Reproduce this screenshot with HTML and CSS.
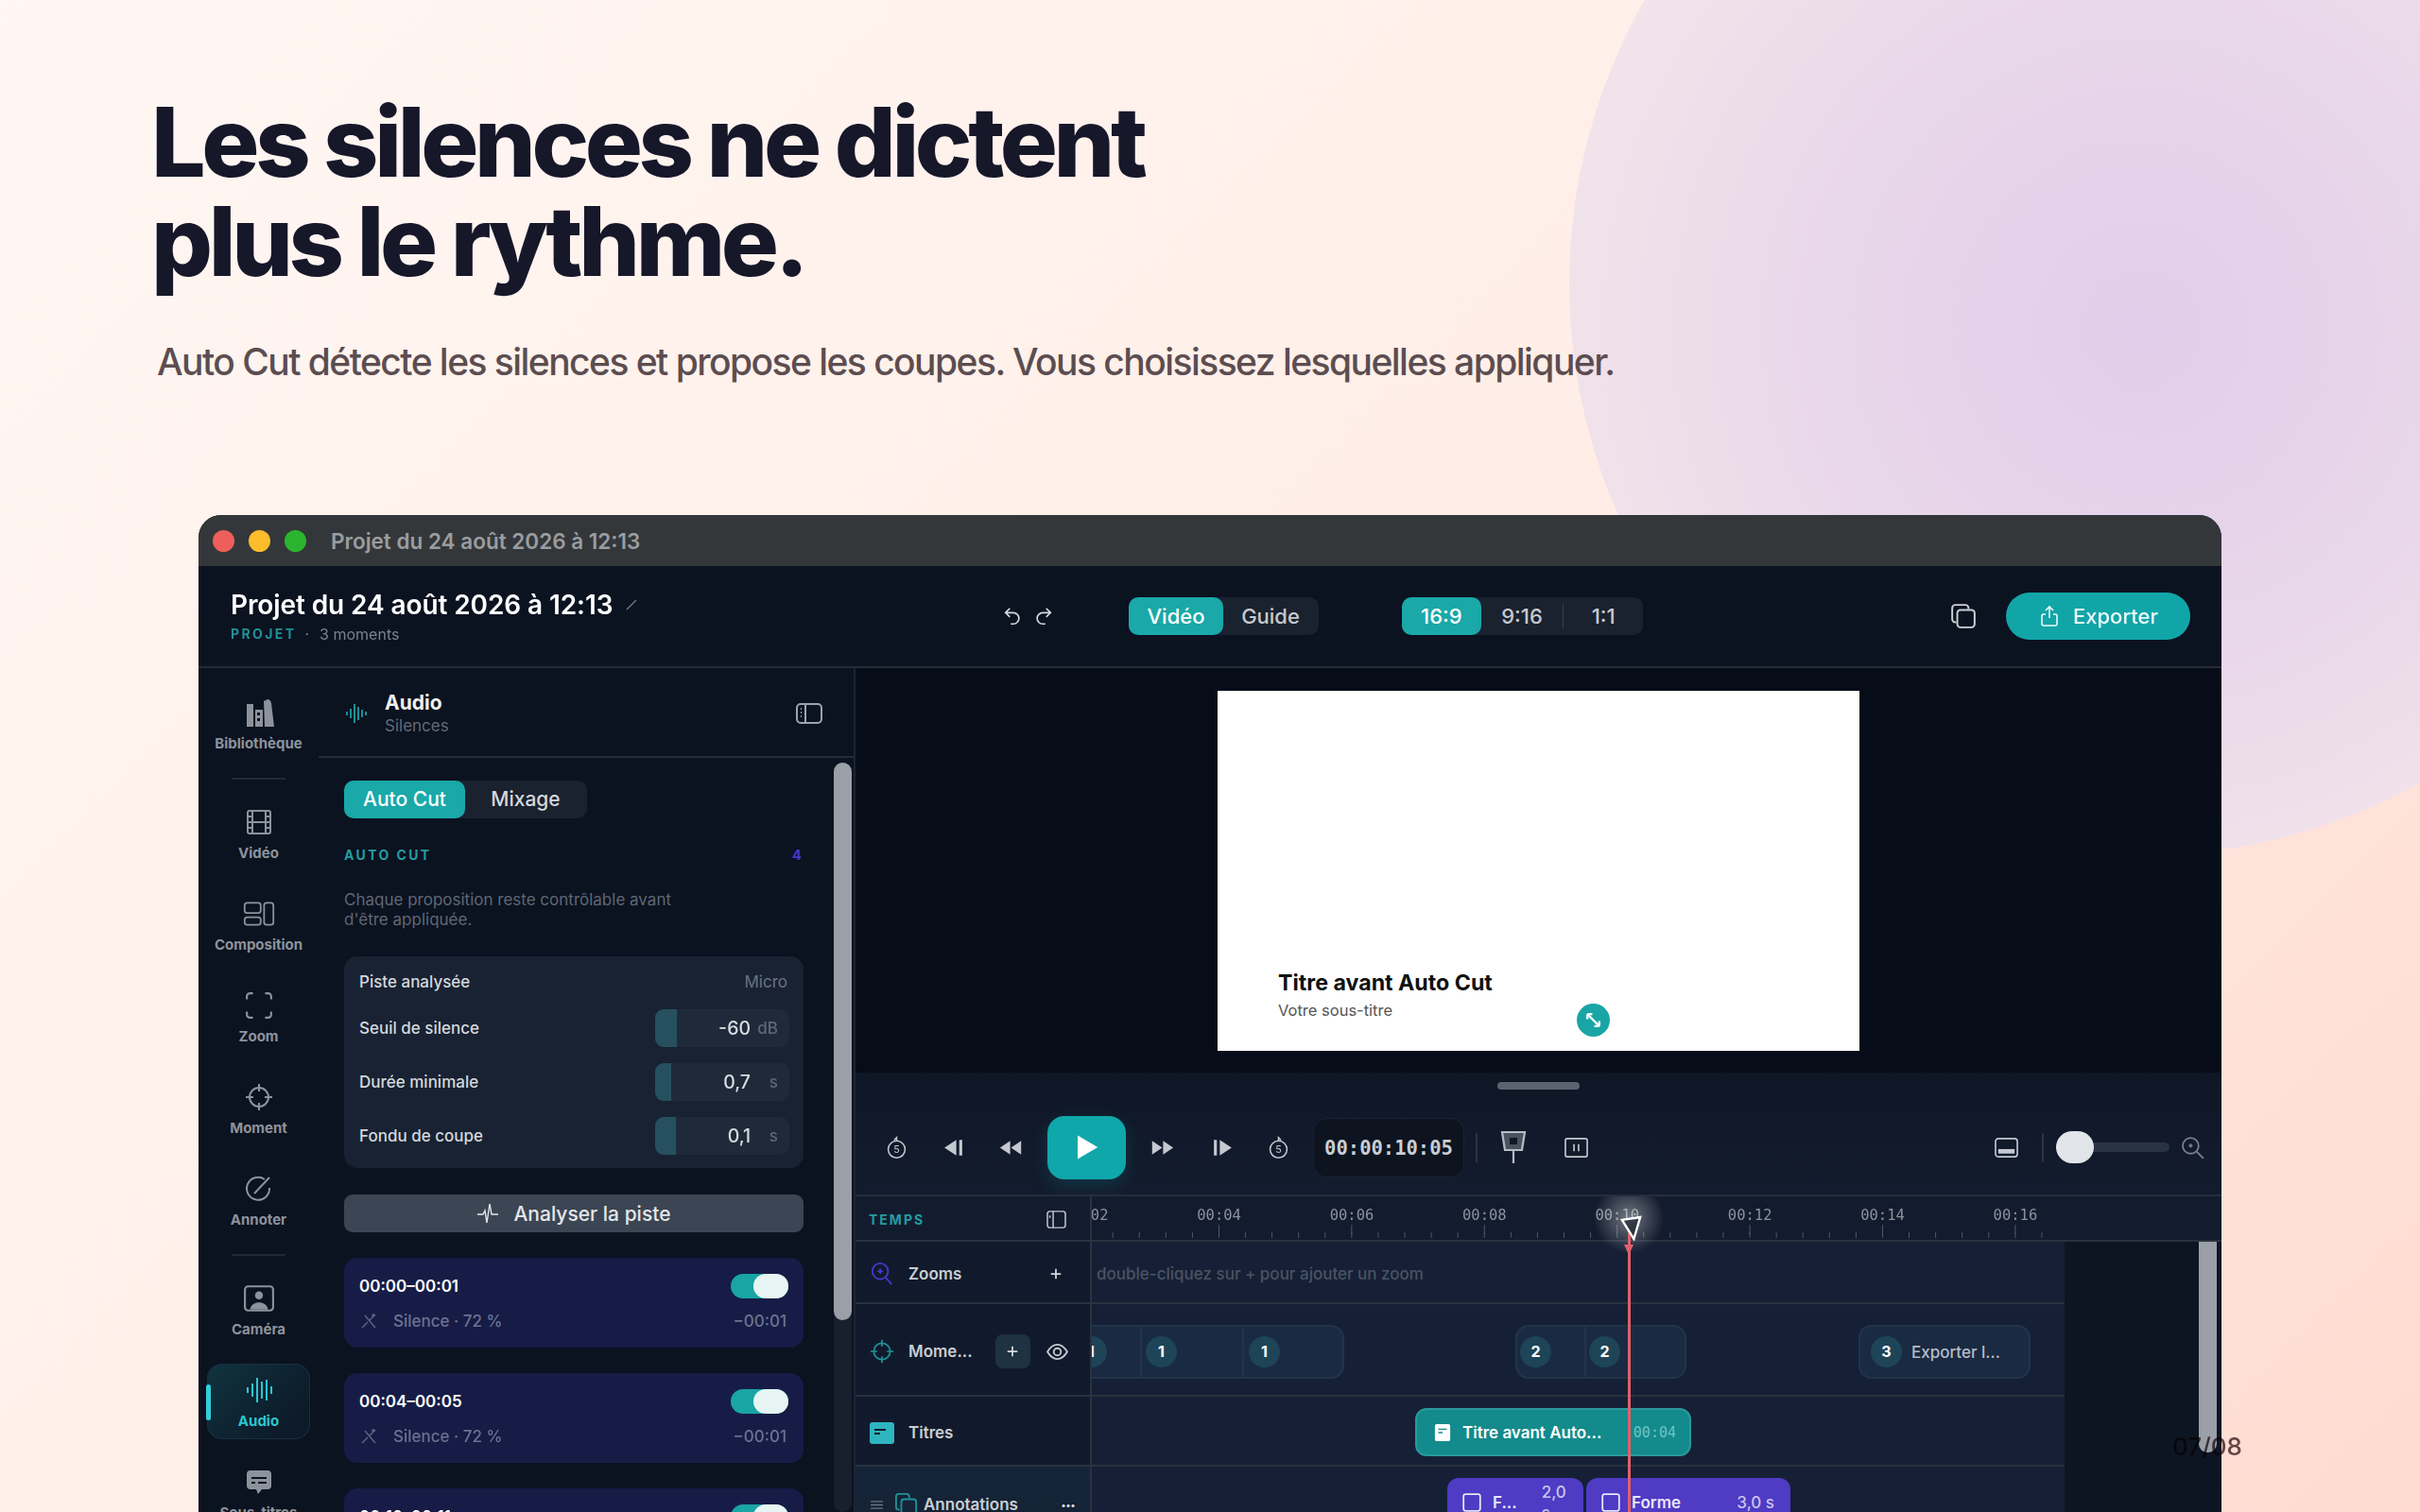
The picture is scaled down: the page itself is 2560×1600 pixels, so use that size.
FILE: index.html
```html
<!DOCTYPE html>
<html lang="fr">
<head>
    <meta charset="UTF-8">
    <title>Auto Cut</title>
    <link rel="stylesheet" href="styles.css">
</head>
<body>
<div class="slide">
    <div class="blob"></div>

    <header class="hero">
        <h1>Les silences ne dictent<br>plus le rythme.</h1>
        <p>Auto Cut détecte les silences et propose les coupes. Vous choisissez lesquelles appliquer.</p>
    </header>

    <div class="window">
        <!-- Title bar -->
        <div class="titlebar">
            <span class="light red"></span>
            <span class="light yellow"></span>
            <span class="light green"></span>
            <span class="titlebar-text">Projet du 24 août 2026 à 12:13</span>
        </div>

        <!-- Project header -->
        <div class="topbar">
            <div class="project">
                <div class="project-name">Projet du 24 août 2026 à 12:13
                    <svg class="pen" viewBox="0 0 14 14"><path d="M2 12 12 2" /></svg>
                </div>
                <div class="project-meta"><b>PROJET</b><i>·</i><span>3 moments</span></div>
            </div>
            <div class="undo">
                <svg viewBox="0 0 24 24"><path d="M9 3 4 8l5 5M4 8h9a6 6 0 0 1 0 13h-3" /></svg>
                <svg viewBox="0 0 24 24"><path d="m15 3 5 5-5 5M20 8h-9a6 6 0 0 0 0 13h3" /></svg>
            </div>
            <div class="seg seg-mode">
                <span class="on">Vidéo</span><span>Guide</span>
            </div>
            <div class="seg seg-ratio">
                <span class="on">16:9</span><span>9:16</span><em></em><span>1:1</span>
            </div>
            <svg class="copy-icon" viewBox="0 0 26 26"><path d="M6 19H5a3 3 0 0 1-3-3V5a3 3 0 0 1 3-3h10a3 3 0 0 1 3 3v1" /><rect x="7" y="7" width="17" height="17" rx="3" /></svg>
            <button class="export">
                <svg viewBox="0 0 24 24"><path d="M12 14V2M8 6l4-4 4 4M8 10H6a2 2 0 0 0-2 2v8a2 2 0 0 0 2 2h12a2 2 0 0 0 2-2v-8a2 2 0 0 0-2-2h-2" /></svg>
                Exporter
            </button>
        </div>

        <div class="workspace">
            <!-- Icon rail -->
            <nav class="rail">
                <div class="rail-item">
                    <svg viewBox="0 0 34 30" class="fill"><path d="M4 6h7v24H4zM13 12h8v18h-8zM15 15v3h3v-3zM15 21v3h3v-3zM22 3l4-2c2 0 3 1 4 4l3 25H23z" fill-rule="evenodd" /></svg>
                    <span>Bibliothèque</span>
                </div>
                <div class="rail-sep"></div>
                <div class="rail-item">
                    <svg viewBox="0 0 30 30"><rect x="3" y="3" width="24" height="24" rx="2" /><path d="M8 3v24M22 3v24M3 15h24M3 9h5M3 21h5M22 9h5M22 21h5" /></svg>
                    <span>Vidéo</span>
                </div>
                <div class="rail-item">
                    <svg viewBox="0 0 38 30"><rect x="2" y="2" width="19" height="12" rx="3" /><rect x="2" y="19" width="19" height="9" rx="3" /><rect x="25" y="2" width="11" height="26" rx="3" /></svg>
                    <span>Composition</span>
                </div>
                <div class="rail-item">
                    <svg viewBox="0 0 28 28"><path d="M2 8V5a3 3 0 0 1 3-3h3M20 2h3a3 3 0 0 1 3 3v3M26 20v3a3 3 0 0 1-3 3h-3M8 26H5a3 3 0 0 1-3-3v-3" /></svg>
                    <span>Zoom</span>
                </div>
                <div class="rail-item">
                    <svg viewBox="0 0 30 30"><circle cx="15" cy="15" r="10" /><path d="M15 1v8M15 21v8M1 15h8M21 15h8" /></svg>
                    <span>Moment</span>
                </div>
                <div class="rail-item">
                    <svg viewBox="0 0 30 30"><path d="M21 5a12 12 0 1 0 5 9" /><path d="M10 20 26 3" /></svg>
                    <span>Annoter</span>
                </div>
                <div class="rail-sep"></div>
                <div class="rail-item">
                    <svg viewBox="0 0 32 28"><rect x="2" y="2" width="28" height="24" rx="3" /><circle cx="16" cy="11" r="4" class="solid" /><path d="M7 25c1-5 5-7 9-7s8 2 9 7z" class="solid" /></svg>
                    <span>Caméra</span>
                </div>
                <div class="rail-item active">
                    <svg viewBox="0 0 30 30"><path d="M3 12v6M8 8v14M13 2v26M18 6v18M23 4v22M28 11v8" /></svg>
                    <span>Audio</span>
                </div>
                <div class="rail-item">
                    <svg viewBox="0 0 30 30"><path class="solid" d="M6 3h18a4 4 0 0 1 4 4v12a4 4 0 0 1-4 4h-6l-4 5-2-5H6a4 4 0 0 1-4-4V7a4 4 0 0 1 4-4z" /><path class="cut" d="M7 11h16M7 16h4M14 16h9" /></svg>
                    <span>Sous-titres</span>
                </div>
            </nav>

            <!-- Audio panel -->
            <aside class="panel">
                <div class="panel-head">
                    <svg class="panel-wave" viewBox="0 0 22 24"><path d="M1 10v4M5 7v10M9 2v20M13 5v14M17 8v8M21 10v4" /></svg>
                    <div>
                        <div class="panel-title">Audio</div>
                        <div class="panel-sub">Silences</div>
                    </div>
                    <svg class="panel-toggle" viewBox="0 0 28 24"><rect x="1" y="2" width="26" height="20" rx="4" /><path d="M10 2v20M5 7h1M5 11h1M5 15h1" /></svg>
                </div>
                <div class="panel-body">
                    <div class="panel-content">
                        <div class="tabs">
                            <span class="on">Auto Cut</span><span>Mixage</span>
                        </div>
                        <div class="section-row"><b>AUTO CUT</b><span>4</span></div>
                        <p class="hint">Chaque proposition reste contrôlable avant<br>d'être appliquée.</p>

                        <div class="settings">
                            <div class="setting-top"><span>Piste analysée</span><span class="muted">Micro</span></div>
                            <div class="setting">
                                <span>Seuil de silence</span>
                                <div class="field"><i class="fill-a"></i><b>-60</b><small>dB</small></div>
                            </div>
                            <div class="setting">
                                <span>Durée minimale</span>
                                <div class="field"><i class="fill-b"></i><b>0,7</b><small>s</small></div>
                            </div>
                            <div class="setting">
                                <span>Fondu de coupe</span>
                                <div class="field"><i class="fill-c"></i><b>0,1</b><small>s</small></div>
                            </div>
                        </div>

                        <button class="analyse">
                            <svg viewBox="0 0 24 24"><path d="M1 13h6l2-4 2 13 3-20 2 11h7" /></svg>
                            Analyser la piste
                        </button>

                        <div class="cut-card">
                            <div class="cut-row"><b>00:00–00:01</b><span class="switch"></span></div>
                            <div class="cut-row sub">
                                <svg viewBox="0 0 20 20"><path d="m3 17 6-6M11 9l6-6M6 4l11 13M15 2v4M13 4h4" /></svg>
                                <span>Silence · 72 %</span><em>−00:01</em>
                            </div>
                        </div>
                        <div class="cut-card">
                            <div class="cut-row"><b>00:04–00:05</b><span class="switch"></span></div>
                            <div class="cut-row sub">
                                <svg viewBox="0 0 20 20"><path d="m3 17 6-6M11 9l6-6M6 4l11 13M15 2v4M13 4h4" /></svg>
                                <span>Silence · 72 %</span><em>−00:01</em>
                            </div>
                        </div>
                        <div class="cut-card">
                            <div class="cut-row"><b>00:10–00:11</b><span class="switch"></span></div>
                        </div>
                    </div>
                    <div class="scroll"><div class="scroll-thumb"></div></div>
                </div>
            </aside>

            <!-- Preview and timeline -->
            <main class="main">
                <div class="stage">
                    <div class="video">
                        <div class="video-title">Titre avant Auto Cut</div>
                        <div class="video-sub">Votre sous-titre</div>
                        <div class="video-dot">
                            <svg viewBox="0 0 20 20"><path d="M4 4l12 12M4 4h5M4 4v5M16 16h-5M16 16v-5" /></svg>
                        </div>
                    </div>
                </div>

                <div class="player">
                    <div class="handle"></div>
                    <div class="controls">
                        <div class="transport">
                            <svg class="ic" viewBox="0 0 24 28"><circle cx="12" cy="16" r="10" /><path d="M12 6V2l-3 3" /><text x="12" y="20.5" class="five">5</text></svg>
                            <svg class="ic solid-ic" viewBox="0 0 24 24"><path d="M15 4v16L3 12zM18 4h3v16h-3z" /></svg>
                            <svg class="ic solid-ic" viewBox="0 0 28 24"><path d="M13 4v16L1 12zM26 4v16L14 12z" /></svg>
                            <button class="play"><svg viewBox="0 0 24 24"><path d="M4 2v20l17-10z" /></svg></button>
                            <svg class="ic solid-ic" viewBox="0 0 28 24"><path d="M2 4v16l12-8zM15 4v16l12-8z" /></svg>
                            <svg class="ic solid-ic" viewBox="0 0 24 24"><path d="M3 4h3v16H3zM9 4v16l12-8z" /></svg>
                            <svg class="ic" viewBox="0 0 24 28"><circle cx="12" cy="16" r="10" /><path d="M12 6V2l3 3" /><text x="12" y="20.5" class="five">5</text></svg>
                            <div class="timecode">00:00:10:05</div>
                            <div class="ctl-sep"></div>
                            <svg class="marker" viewBox="0 0 28 36"><path class="marker-body" d="M2 2h24l-3 19H5z" /><rect x="10" y="8" width="8" height="7" class="marker-hole" /><path d="M14 21v14" /></svg>
                            <svg class="ic" viewBox="0 0 26 24"><rect x="1" y="2" width="24" height="20" rx="2" /><path d="M10.500 8v8M15.500 8v8" /></svg>
                        </div>
                        <div class="view-tools">
                            <svg class="ic" viewBox="0 0 26 22"><rect x="1" y="1" width="24" height="20" rx="3" /><path class="thick" d="M4 15h18" /></svg>
                            <div class="ctl-sep tall"></div>
                            <div class="slider"><span></span></div>
                            <svg class="ic dim" viewBox="0 0 24 24"><circle cx="10" cy="10" r="8" /><path d="m16 16 7 7M10 8v4M8 10h4" /></svg>
                        </div>
                    </div>

                    <div class="timeline">
                        <div class="ruler">
                            <div class="ruler-head">
                                <b>TEMPS</b>
                                <svg viewBox="0 0 24 22"><rect x="1" y="1" width="22" height="20" rx="3" /><path d="M8 1v20M4 6v3" /></svg>
                            </div>
                            <div class="ruler-track">
                                <div class="ruler-labels">
                                    <span>00:02</span><span>00:04</span><span>00:06</span><span>00:08</span><span>00:10</span><span>00:12</span><span>00:14</span><span>00:16</span>
                                </div>
                                <div class="ticks"></div>
                            </div>
                        </div>

                        <div class="tracks">
                            <div class="row row-zooms">
                                <div class="row-head">
                                    <svg class="row-ic purple" viewBox="0 0 26 28"><circle cx="11" cy="11" r="9" /><path d="m17 18 7 8M11 8v6M8 11h6" /></svg>
                                    <span>Zooms</span>
                                    <svg class="plus" viewBox="0 0 16 16"><path d="M8 2v12M2 8h12" /></svg>
                                </div>
                                <div class="row-track hint-track">double-cliquez sur + pour ajouter un zoom</div>
                            </div>

                            <div class="row row-moments">
                                <div class="row-head">
                                    <svg class="row-ic teal" viewBox="0 0 30 30"><circle cx="15" cy="15" r="10" /><path d="M15 1v8M15 21v8M1 15h8M21 15h8" /></svg>
                                    <span>Mome...</span>
                                    <div class="add-box"><svg class="plus" viewBox="0 0 16 16"><path d="M8 2v12M2 8h12" /></svg></div>
                                    <svg class="eye" viewBox="0 0 24 20"><path d="M1 10c3-5 7-8 11-8s8 3 11 8c-3 5-7 8-11 8S4 15 1 10z" /><circle cx="12" cy="10" r="4" /></svg>
                                </div>
                                <div class="row-track">
                                    <div class="moment m-a">
                                        <div class="slot slot-a"><u>1</u></div>
                                        <div class="slot slot-b"><u>1</u></div>
                                        <div class="slot"><u>1</u></div>
                                    </div>
                                    <div class="moment m-b">
                                        <div class="slot slot-c"><u>2</u></div>
                                        <div class="slot"><u>2</u></div>
                                    </div>
                                    <div class="moment m-c">
                                        <div class="slot"><u>3</u><span>Exporter l...</span></div>
                                    </div>
                                </div>
                            </div>

                            <div class="row row-titles">
                                <div class="row-head">
                                    <svg class="row-ic cyan" viewBox="0 0 26 26"><rect x="1" y="3" width="24" height="21" rx="2" /><path d="M5 10h12M5 14h6" /></svg>
                                    <span>Titres</span>
                                </div>
                                <div class="row-track">
                                    <div class="title-clip">
                                        <svg viewBox="0 0 20 22"><rect x="1" y="1" width="18" height="20" rx="2" /><path d="M5 7h10M5 11h5" /></svg>
                                        <span>Titre avant Auto...</span>
                                        <em>00:04</em>
                                    </div>
                                </div>
                            </div>

                            <div class="row row-notes">
                                <div class="row-head">
                                    <svg class="drag" viewBox="0 0 16 12"><path d="M1 2h14M1 6h14M1 10h14" /></svg>
                                    <svg class="row-ic teal notes-ic" viewBox="0 0 26 26"><path d="M5 19H4a3 3 0 0 1-3-3V4a3 3 0 0 1 3-3h9a3 3 0 0 1 3 3v2" /><rect x="7" y="7" width="17" height="18" rx="3" /></svg>
                                    <span>Annotations</span>
                                    <b class="dots">•••</b>
                                </div>
                                <div class="row-track">
                                    <div class="note n-a">
                                        <svg viewBox="0 0 20 20"><rect x="2" y="2" width="16" height="16" rx="2" /></svg>
                                        <span>F...</span><em>2,0<br>s</em>
                                    </div>
                                    <div class="note n-b">
                                        <svg viewBox="0 0 20 20"><rect x="2" y="2" width="16" height="16" rx="2" /></svg>
                                        <span>Forme</span><em>3,0 s</em>
                                    </div>
                                </div>
                            </div>
                        </div>

                        <div class="tl-scroll"></div>
                        <div class="glow"></div>
                        <div class="playhead"></div>
                        <svg class="cursor" viewBox="0 0 26 28"><path d="M3 5 23 2 16 26z" /></svg>
                    </div>
                </div>
            </main>
        </div>
    </div>

    <div class="page-num">07/08</div>
</div>
</body>
</html>
```

FILE: styles.css
```css
/* Slide */
* {
    box-sizing: border-box;
}
html, body {
    margin: 0;
    padding: 0;
}
body {
    font-family: "Inter", "Liberation Sans", sans-serif;
}
.slide {
    position: relative;
    width: 2560px;
    height: 1600px;
    overflow: hidden;
    background: linear-gradient(135deg, #fff7f3 0%, #ffeee7 50%, #ffdbd1 100%);
}
.blob {
    position: absolute;
    left: 1660px;
    top: -305px;
    width: 1210px;
    height: 1210px;
    border-radius: 50%;
    background: radial-gradient(circle at 50% 54%, #e2cdea 0%, #e8d6ea 35%, #f2e4ea 72%, #f8ebea 100%);
}

/* Hero */
.hero {
    position: relative;
    padding: 98px 0 0 160px;
    height: 545px;
}
.hero h1 {
    margin: 0;
    font-size: 102px;
    line-height: 105px;
    font-weight: 850;
    letter-spacing: -4.4px;
    color: #17172a;
}
.hero p {
    margin: 51px 0 0 6px;
    font-size: 39px;
    line-height: 48px;
    font-weight: 500;
    letter-spacing: -1.55px;
    color: #5c4d50;
}

/* Window */
.window {
    position: relative;
    margin-left: 210px;
    width: 2140px;
    height: 1055px;
    overflow: hidden;
    border-radius: 24px 24px 0 0;
    background: #0b1220;
    color: #d4d8dd;
    filter: blur(0.5px);
}
.titlebar {
    height: 54px;
    background: #34373a;
    display: flex;
    align-items: center;
    padding-left: 15px;
}
.light {
    width: 23px;
    height: 23px;
    border-radius: 50%;
    margin-right: 15px;
}
.red { background: #ee5f5b; }
.yellow { background: #fdbc2c; }
.green { background: #2bb52f; }
.titlebar-text {
    margin-left: 11px;
    font-size: 22.500px;
    font-weight: 600;
    color: #9a9da0;
}

/* Top bar */
.topbar {
    height: 108px;
    display: flex;
    align-items: center;
    border-bottom: 2px solid #252c38;
    position: relative;
}
.project {
    margin-left: 34px;
    width: 791px;
    flex: none;
}
.project-name {
    font-size: 28px;
    font-weight: 600;
    line-height: 34px;
    letter-spacing: -0.1px;
    color: #fff;
    display: flex;
    align-items: center;
    gap: 13px;
}
.pen {
    width: 14px;
    height: 14px;
    fill: none;
    stroke: #6f7783;
    stroke-width: 1.5;
}
.project-meta {
    margin-top: 4px;
    font-size: 16px;
    line-height: 20px;
    color: #7b828e;
    display: flex;
    align-items: center;
}
.project-meta b {
    font-size: 14px;
    letter-spacing: 2.4px;
    color: #1f9297;
}
.project-meta i {
    font-style: normal;
    margin: 0 11px 0 9px;
}
.undo {
    display: flex;
    gap: 11px;
    width: 134px;
    margin-left: 25px;
}
.undo svg {
    width: 22px;
    height: 22px;
    fill: none;
    stroke: #d5d9de;
    stroke-width: 1.8;
}
.seg {
    display: flex;
    align-items: center;
    height: 40px;
    background: #1a2230;
    border-radius: 10px;
    font-size: 22px;
    font-weight: 500;
    color: #c6cad0;
}
.seg span {
    height: 40px;
    line-height: 40px;
    text-align: center;
}
.seg span.on {
    background: #1aa8a8;
    color: #fff;
    border-radius: 10px;
}
.seg-mode {
    width: 201px;
    margin-right: 88px;
    flex: none;
}
.seg-mode span { width: 100px; }
.seg-ratio {
    width: 255px;
    flex: none;
}
.seg-ratio span { width: 84px; }
.seg-ratio span:nth-child(2) { width: 87px; }
.seg-ratio em {
    width: 1px;
    height: 25px;
    background: #3a4250;
}
.copy-icon {
    width: 28px;
    height: 28px;
    margin-left: 325px;
    fill: none;
    stroke: #cdd1d7;
    stroke-width: 1.8;
    flex: none;
}
.export {
    margin-left: 31px;
    width: 195px;
    height: 50px;
    flex: none;
    border: none;
    border-radius: 25px;
    background: #12a5a8;
    color: #eafafa;
    font: 500 22px "Inter", sans-serif;
    display: flex;
    align-items: center;
    justify-content: center;
    gap: 13px;
}
.export svg {
    width: 24px;
    height: 26px;
    fill: none;
    stroke: #eafafa;
    stroke-width: 1.6;
}

/* Workspace */
.workspace {
    display: flex;
    height: 893px;
}
.rail {
    width: 127px;
    flex: none;
    padding-top: 19px;
    display: flex;
    flex-direction: column;
    align-items: center;
    gap: 17px;
}
.rail-item {
    position: relative;
    width: 109px;
    height: 80px;
    flex: none;
    display: flex;
    flex-direction: column;
    align-items: center;
    color: #8d939c;
    font-size: 15px;
    font-weight: 700;
    white-space: nowrap;
}
.rail-item svg {
    width: 34px;
    height: 30px;
    margin-top: 13px;
    fill: none;
    stroke: currentColor;
    stroke-width: 2;
    flex: none;
}
.rail-item svg.fill {
    fill: currentColor;
    stroke: none;
}
.rail-item span {
    position: absolute;
    top: 51px;
    line-height: 20px;
}
.solid {
    fill: currentColor;
    stroke: none;
}
.cut {
    stroke: #0b1220;
}
.rail-sep {
    width: 57px;
    height: 2px;
    flex: none;
    background: #20283a;
}
.rail-item.active {
    color: #2fc4d0;
    border-radius: 16px;
    box-shadow: inset 0 0 0 1px #17303f;
    background: linear-gradient(135deg, #103340, #0d1a29 80%);
}
.rail-item.active::before {
    content: "";
    position: absolute;
    left: -1px;
    top: 22px;
    width: 5px;
    height: 38px;
    border-radius: 3px;
    background: #2fd0dc;
}

/* Audio panel */
.panel {
    width: 568px;
    flex: none;
    border-right: 2px solid #1d2432;
    display: flex;
    flex-direction: column;
}
.panel-head {
    height: 95px;
    flex: none;
    border-bottom: 2px solid #252c38;
    display: flex;
    align-items: center;
    padding-left: 29px;
    padding-top: 2px;
}
.panel-wave {
    width: 22px;
    height: 24px;
    fill: none;
    stroke: #1a8f96;
    stroke-width: 2;
    margin-right: 19px;
}
.panel-title {
    font-size: 21px;
    font-weight: 700;
    line-height: 26px;
    color: #eef0f2;
}
.panel-sub {
    font-size: 17px;
    line-height: 22px;
    color: #626a77;
}
.panel-toggle {
    width: 28px;
    height: 24px;
    margin-left: auto;
    margin-right: 33px;
    fill: none;
    stroke: #9da3ad;
    stroke-width: 2;
}
.panel-body {
    flex: 1;
    display: flex;
    padding-left: 27px;
    min-height: 0;
}
.panel-content {
    width: 486px;
    flex: none;
    padding-top: 24px;
}
.scroll {
    width: 19px;
    margin-left: 32px;
    margin-top: 5px;
    border-radius: 10px;
    background: #182030;
    flex: none;
}
.scroll-thumb {
    height: 590px;
    border-radius: 10px;
    background: #9a9fa8;
}
.tabs {
    display: flex;
    width: 257px;
    height: 40px;
    background: #1a2230;
    border-radius: 10px;
    font-size: 21px;
    font-weight: 500;
    color: #d4d8dd;
}
.tabs span {
    width: 128px;
    line-height: 40px;
    text-align: center;
}
.tabs .on {
    background: #1aa8a8;
    color: #fff;
    border-radius: 10px;
}
.section-row {
    margin-top: 27px;
    height: 22px;
    display: flex;
    justify-content: space-between;
    align-items: center;
    padding-right: 2px;
    font-size: 14px;
}
.section-row b {
    letter-spacing: 2.4px;
    color: #259ca1;
}
.section-row span {
    color: #4338ca;
    font-weight: 700;
    font-size: 15px;
}
.hint {
    margin: 27px 0 0;
    font-size: 17px;
    line-height: 21px;
    color: #5f6875;
}
.settings {
    margin-top: 28px;
    height: 224px;
    padding: 17px 15px 0 16px;
    border-radius: 14px;
    background: #182232;
    font-size: 17px;
    font-weight: 500;
}
.setting-top {
    display: flex;
    justify-content: space-between;
    height: 20px;
    line-height: 20px;
    margin-bottom: 18px;
    padding-right: 2px;
}
.muted {
    color: #6b7380;
    font-weight: 400;
}
.setting {
    display: flex;
    justify-content: space-between;
    align-items: center;
    height: 41px;
    margin-bottom: 16px;
}
.field {
    position: relative;
    width: 142px;
    height: 40px;
    border-radius: 9px;
    background: #1e2a39;
    overflow: hidden;
    display: flex;
    align-items: center;
    justify-content: flex-end;
}
.field i {
    position: absolute;
    left: 0;
    top: 0;
    bottom: 0;
    background: #27505f;
}
.fill-a { width: 23px; }
.fill-b { width: 17px; }
.fill-c { width: 22px; }
.field b {
    font-size: 19.500px;
    font-weight: 500;
    color: #d8dce0;
}
.field small {
    width: 41px;
    padding-right: 12px;
    text-align: right;
    font-size: 17px;
    color: #5f6875;
}
.analyse {
    margin-top: 28px;
    width: 100%;
    height: 40px;
    border: none;
    border-radius: 9px;
    background: #3c4553;
    color: #e3e6ea;
    font: 500 21px "Inter", sans-serif;
    display: flex;
    align-items: center;
    justify-content: center;
    gap: 15px;
}
.analyse svg {
    width: 24px;
    height: 24px;
    fill: none;
    stroke: #e3e6ea;
    stroke-width: 1.4;
}
.cut-card {
    margin-top: 27px;
    height: 95px;
    padding: 17px 16px 0;
    border-radius: 14px;
    background: #161c46;
}
.cut-row {
    display: flex;
    align-items: center;
    justify-content: space-between;
    height: 26px;
    font-size: 17px;
    color: #fff;
}
.cut-row b {
    font-weight: 600;
}
.switch {
    position: relative;
    width: 61px;
    height: 26px;
    border-radius: 13px;
    background: #1aa5a5;
}
.switch::after {
    content: "";
    position: absolute;
    right: 0;
    top: 0;
    width: 37px;
    height: 26px;
    border-radius: 13px;
    background: #e6f5f4;
}
.cut-row.sub {
    margin-top: 11px;
    color: #6b7290;
    font-weight: 500;
}
.cut-row.sub svg {
    width: 20px;
    height: 20px;
    margin-right: 16px;
    fill: none;
    stroke: #5a6280;
    stroke-width: 1.5;
    flex: none;
}
.cut-row.sub span {
    flex: 1;
}
.cut-row.sub em {
    font-style: normal;
    padding-right: 2px;
}

/* Preview */
.main {
    flex: 1;
    min-width: 0;
    display: flex;
    flex-direction: column;
}
.stage {
    height: 428px;
    flex: none;
    padding-top: 24px;
    padding-left: 383px;
    background: #070c19;
}
.video {
    position: relative;
    width: 679px;
    height: 381px;
    background: #fff;
    padding: 293px 0 0 64px;
}
.video-title {
    font-size: 23.200px;
    font-weight: 700;
    line-height: 32px;
    color: #111;
}
.video-sub {
    margin-top: 3px;
    font-size: 16.500px;
    line-height: 20px;
    color: #555;
}
.video-dot {
    position: absolute;
    left: 380px;
    top: 331px;
    width: 35px;
    height: 35px;
    border-radius: 50%;
    background: #1aa5a5;
    display: flex;
    align-items: center;
    justify-content: center;
}
.video-dot svg {
    width: 21px;
    height: 21px;
    fill: none;
    stroke: #fff;
    stroke-width: 2.2;
}

/* Player */
.player {
    flex: 1;
    min-height: 0;
    display: flex;
    flex-direction: column;
    background: linear-gradient(#0f1726, #131c2e 130px);
}
.handle {
    width: 87px;
    height: 8px;
    margin: 10px 0 0 679px;
    border-radius: 4px;
    background: #5b6270;
    flex: none;
}
.controls {
    height: 113px;
    flex: none;
    padding-top: 11px;
    display: flex;
    align-items: center;
    justify-content: space-between;
    border-bottom: 2px solid #252d3c;
}
.transport {
    margin-left: 13px;
    display: grid;
    grid-template-columns: 60px 60px 62px 99px 60px 68px 50px 184px 2px 76px 56px;
    justify-items: center;
    align-items: center;
}
.ic {
    width: 25px;
    height: 25px;
    fill: none;
    stroke: #c4c9d0;
    stroke-width: 1.7;
}
.ic.solid-ic {
    fill: #c4c9d0;
    stroke: none;
}
.ic.dim {
    stroke: #7a818c;
}
.five {
    font-size: 12px;
    fill: #c4c9d0;
    stroke: none;
    text-anchor: middle;
    font-family: "Inter", sans-serif;
}
.play {
    width: 83px;
    height: 67px;
    border: none;
    border-radius: 18px;
    background: #10a7aa;
    box-shadow: 0 6px 18px rgba(16, 167, 170, 0.2);
    display: flex;
    align-items: center;
    justify-content: center;
}
.play svg {
    width: 30px;
    height: 30px;
    fill: #fff;
}
.timecode {
    width: 160px;
    height: 63px;
    line-height: 63px;
    text-align: center;
    border-radius: 14px;
    background: #0d1420;
    border: 1px solid #1a2333;
    font-family: "DejaVu Sans Mono", monospace;
    font-size: 20.500px;
    font-weight: 700;
    color: #c9ced4;
}
.ctl-sep {
    width: 2px;
    height: 31px;
    background: #2c3443;
}
.marker {
    width: 28px;
    height: 36px;
    fill: none;
    stroke: #b6bbc3;
    stroke-width: 2.2;
}
.marker-body {
    fill: #4a5260;
}
.marker-hole {
    fill: #10182a;
    stroke: none;
}
.view-tools {
    display: flex;
    align-items: center;
    padding-right: 18px;
}
.ctl-sep.tall {
    margin: 0 13px 0 25px;
}
.thick {
    stroke-width: 5;
}
.slider {
    position: relative;
    width: 120px;
    height: 10px;
    margin-right: 12px;
    border-radius: 5px;
    background: #2a3344;
}
.slider span {
    position: absolute;
    left: 0;
    top: -12px;
    width: 40px;
    height: 34px;
    border-radius: 17px;
    background: #e1e4e8;
}

/* Timeline */
.timeline {
    position: relative;
    flex: 1;
    min-height: 0;
    overflow: hidden;
    background: #0e1522;
}
.ruler {
    height: 48px;
    display: flex;
    background: #131c2e;
    border-bottom: 2px solid #2a3240;
}
.ruler-head {
    width: 250px;
    flex: none;
    border-right: 2px solid #2a3240;
    display: flex;
    align-items: center;
    justify-content: space-between;
    padding: 2px 25px 0 14px;
}
.ruler-head b {
    font-size: 14px;
    letter-spacing: 2px;
    color: #259ca1;
}
.ruler-head svg {
    width: 21px;
    height: 19px;
    fill: none;
    stroke: #c4c9d0;
    stroke-width: 1.7;
}
.ruler-track {
    position: relative;
    flex: 1;
    overflow: hidden;
}
.ruler-labels {
    display: grid;
    grid-template-columns: repeat(8, 140.4px);
    margin-left: -76px;
    padding-top: 10px;
    font-family: "DejaVu Sans Mono", monospace;
    font-size: 15.500px;
    line-height: 20px;
    color: #8b929c;
    text-align: center;
}
.ticks {
    position: absolute;
    left: 0;
    top: 30px;
    bottom: 2px;
    width: 1008px;
    background-image:
        linear-gradient(90deg, #4f5866 1px, transparent 1px),
        linear-gradient(90deg, #4f5866 1px, transparent 1px);
    background-size: 140.4px 10px, 28.08px 6px;
    background-position: 134px 0, 21.700px 100%;
    background-repeat: repeat-x;
}
.tracks {
    width: 1279px;
}
.row {
    display: flex;
    border-bottom: 2px solid #2a3240;
    background: #152036;
}
.row-zooms { height: 66px; }
.row-moments { height: 98px; }
.row-titles { height: 74px; }
.row-notes {
    height: 76px;
    border-bottom: none;
}
.row-head {
    width: 250px;
    flex: none;
    display: flex;
    align-items: center;
    padding: 4px 0 0 15px;
    border-right: 2px solid #2a3240;
    background: #111a2c;
    font-size: 17px;
    font-weight: 600;
    color: #c9ced4;
    position: relative;
}
.row-notes .row-head {
    background: linear-gradient(#16243a, #142234);
}
.row-ic {
    width: 26px;
    height: 26px;
    margin-right: 15px;
    fill: none;
    stroke-width: 2;
    flex: none;
}
.purple { stroke: #4338ca; }
.teal { stroke: #1f9297; }
.cyan {
    fill: #2fb5c0;
    stroke: #2fb5c0;
}
.cyan path { stroke: #111a2c; }
.plus {
    width: 14px;
    height: 14px;
    fill: none;
    stroke: #d5d9de;
    stroke-width: 2;
    flex: none;
}
.row-zooms .plus {
    margin-left: auto;
    margin-right: 29px;
}
.add-box {
    width: 37px;
    height: 36px;
    margin-left: 24px;
    border-radius: 8px;
    background: #1d3342;
    display: flex;
    align-items: center;
    justify-content: center;
    flex: none;
}
.eye {
    width: 23px;
    height: 19px;
    margin-left: 17px;
    fill: none;
    stroke: #c4c9d0;
    stroke-width: 2;
    flex: none;
}
.drag {
    width: 15px;
    height: 11px;
    margin-right: 12px;
    fill: none;
    stroke: #6e7684;
    stroke-width: 1.5;
    flex: none;
}
.notes-ic {
    width: 24px;
    height: 26px;
    margin-right: 6px;
}
.dots {
    margin-left: auto;
    margin-right: 15px;
    font-size: 10px;
    letter-spacing: 1px;
    color: #d5d9de;
}
.row-track {
    position: relative;
    flex: 1;
    overflow: hidden;
}
.hint-track {
    padding-left: 5px;
    line-height: 68px;
    font-size: 17px;
    font-weight: 500;
    color: #4a5362;
}
.moment {
    position: absolute;
    top: 22px;
    height: 57px;
    display: flex;
    border: 2px solid #233349;
    border-radius: 14px;
    background: #1a2a42;
}
.m-a { left: -60px; width: 327px; }
.m-b { left: 448px; width: 181px; }
.m-c { left: 811px; width: 182px; }
.slot {
    display: flex;
    align-items: center;
    gap: 10px;
    padding-left: 5px;
    font-size: 17px;
    font-weight: 500;
    color: #b6bcc5;
    white-space: nowrap;
}
.slot-a {
    width: 111px;
    padding-left: 41px;
    border-right: 2px solid #233349;
}
.slot-b {
    width: 108px;
    padding-left: 4px;
    border-right: 2px solid #233349;
}
.slot-c {
    width: 73px;
    padding-left: 3px;
    border-right: 2px solid #233349;
}
.m-b .slot:last-child { padding-left: 3px; }
.m-c .slot { padding-left: 11px; }
.slot u {
    width: 33px;
    height: 33px;
    border-radius: 50%;
    background: #1d4557;
    color: #fff;
    font-size: 16px;
    font-weight: 700;
    text-decoration: none;
    text-align: center;
    line-height: 33px;
    flex: none;
}
.title-clip {
    position: absolute;
    left: 342px;
    top: 12px;
    width: 292px;
    height: 51px;
    border: 2px solid #2a9a9c;
    border-radius: 12px;
    background: #138a8c;
    display: flex;
    align-items: center;
    padding-left: 18px;
    color: #fff;
    font-size: 17px;
    font-weight: 600;
}
.title-clip svg {
    width: 18px;
    height: 20px;
    margin-right: 12px;
    fill: #fff;
}
.title-clip svg path {
    stroke: #138a8c;
    stroke-width: 1.6;
}
.title-clip em {
    margin-left: auto;
    margin-right: 14px;
    font: 500 15px "DejaVu Sans Mono", monospace;
    color: #6ec4c4;
}
.note {
    position: absolute;
    top: 12px;
    height: 70px;
    border-radius: 12px;
    background: #4f3bc4;
    display: flex;
    align-items: flex-start;
    padding: 15px 0 0 15px;
    color: #e8e6f8;
    font-size: 17px;
    font-weight: 600;
    line-height: 22px;
}
.note svg {
    width: 22px;
    height: 22px;
    fill: none;
    stroke: #e8e6f8;
    stroke-width: 1.6;
    margin-right: 11px;
    flex: none;
}
.note em {
    font-style: normal;
    font-weight: 500;
    color: #c9c4ef;
}
.n-a { left: 376px; width: 144px; }
.n-a em { margin-left: 26px; margin-top: -11px; }
.n-b { left: 523px; width: 216px; padding-left: 15px; }
.n-b em { margin-left: auto; margin-right: 17px; }
.tl-scroll {
    position: absolute;
    left: 1421px;
    top: 48px;
    width: 19px;
    height: 223px;
    border-radius: 0 0 9px 9px;
    background: #9a9fa8;
}
.tl-scroll::after {
    content: "";
    position: absolute;
    left: 0;
    right: 0;
    top: 100%;
    height: 80px;
    background: #1c2030;
    z-index: -1;
}
.playhead {
    position: absolute;
    left: 817px;
    top: 37px;
    bottom: 0;
    width: 3px;
    background: #e0606a;
}
.playhead::before {
    content: "";
    position: absolute;
    left: -4px;
    top: 14px;
    border-left: 5.5px solid transparent;
    border-right: 5.500px solid transparent;
    border-top: 11px solid #e0606a;
}
.glow {
    position: absolute;
    left: 780px;
    top: -15px;
    width: 76px;
    height: 76px;
    border-radius: 50%;
    background: radial-gradient(circle, rgba(255, 255, 255, 0.4), rgba(255, 255, 255, 0) 70%);
}
.cursor {
    position: absolute;
    left: 808px;
    top: 20px;
    width: 25px;
    height: 27px;
    fill: rgba(20, 28, 44, 0.6);
    stroke: #fff;
    stroke-width: 2.5;
}

/* Page number */
.page-num {
    position: absolute;
    left: 2298px;
    top: 1515px;
    font-size: 26px;
    font-weight: 500;
    line-height: 32px;
    color: #634f54;
    mix-blend-mode: multiply;
}
```
